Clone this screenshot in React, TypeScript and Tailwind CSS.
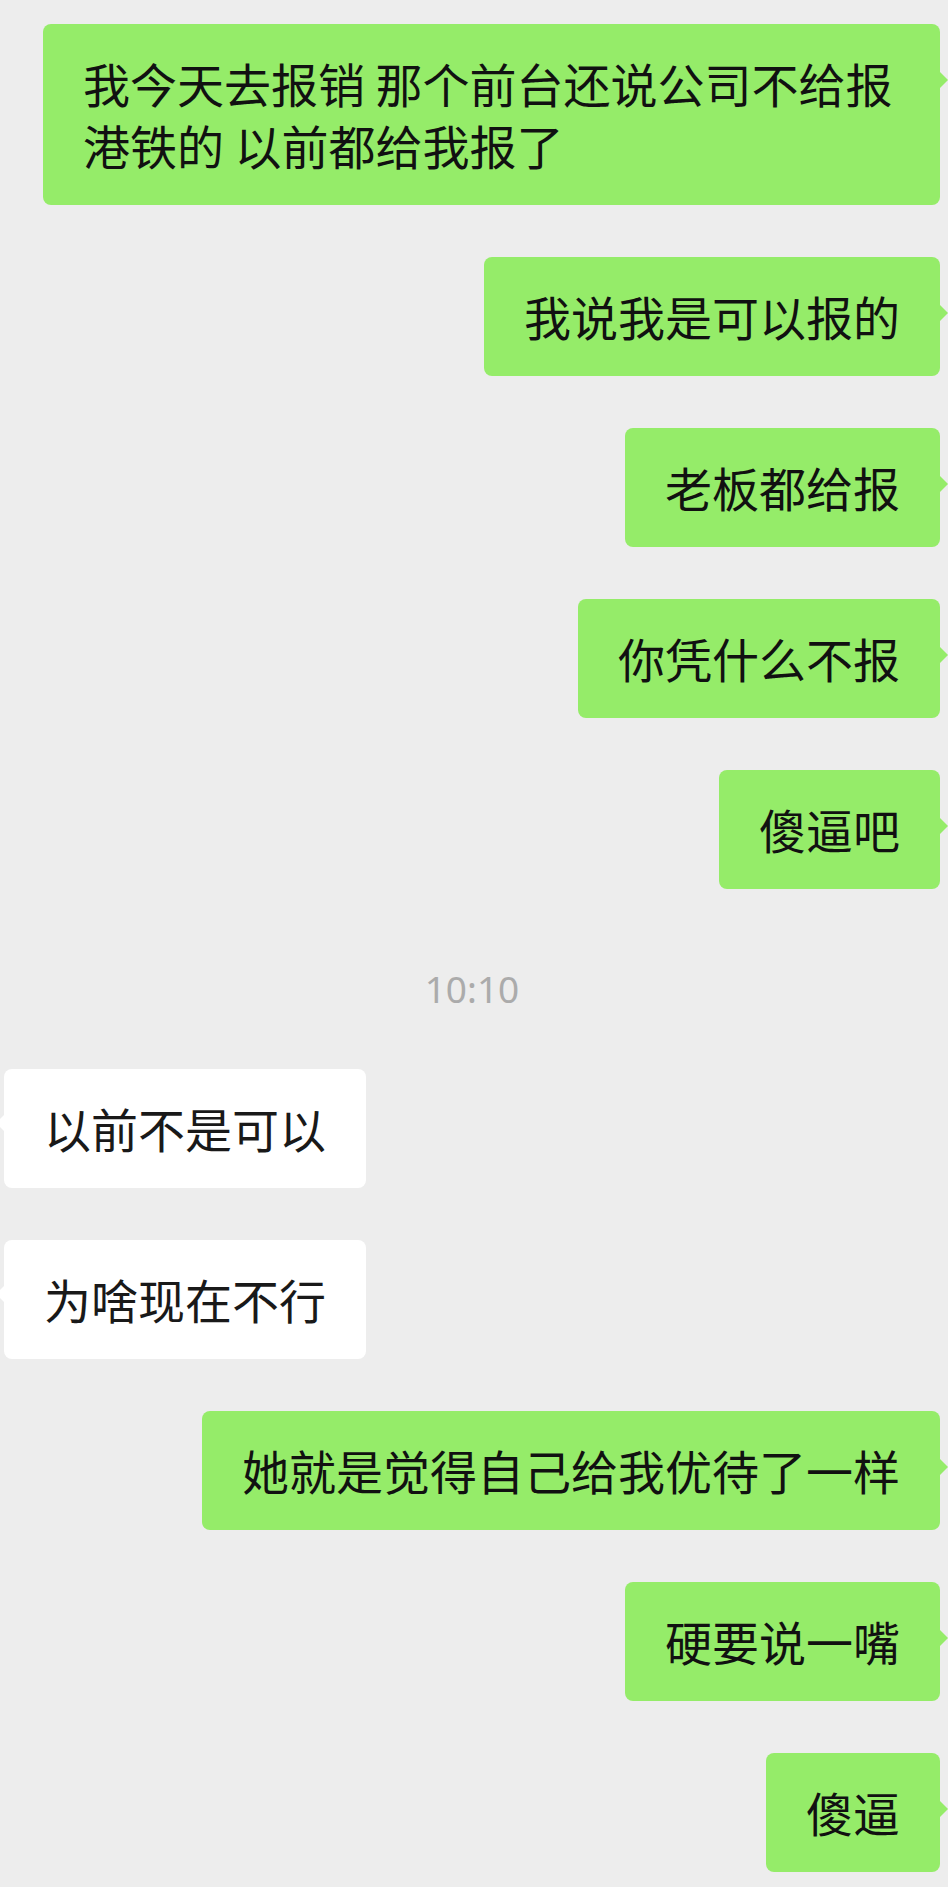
import React from 'react'

interface Message {
  text: string
  mine: boolean
}

const before: Message[] = [
  { text: '我今天去报销 那个前台还说公司不给报港铁的 以前都给我报了', mine: true },
  { text: '我说我是可以报的', mine: true },
  { text: '老板都给报', mine: true },
  { text: '你凭什么不报', mine: true },
  { text: '傻逼吧', mine: true },
]

const after: Message[] = [
  { text: '以前不是可以', mine: false },
  { text: '为啥现在不行', mine: false },
  { text: '她就是觉得自己给我优待了一样', mine: true },
  { text: '硬要说一嘴', mine: true },
  { text: '傻逼', mine: true },
]

const font = { fontFamily: '"Noto Sans CJK SC", "Noto Sans", sans-serif' }

function Bubble({ text, mine }: Message) {
  return (
    <div className={mine ? 'flex justify-end' : 'flex justify-start'}>
      <div
        className={
          mine
            ? 'relative max-w-[897px] rounded-[8px] bg-[#95ec69] px-[40px] pt-[28px] pb-[29px] text-[47px] leading-[62px] text-[#111111]'
            : 'relative max-w-[897px] rounded-[8px] bg-white px-[40px] pt-[28px] pb-[29px] text-[47px] leading-[62px] text-[#191919]'
        }
        style={font}
      >
        {text}
        {/* little tail pointing at the avatar side */}
        {mine ? (
          <span className="absolute right-[-8px] top-[48px] h-0 w-0 border-y-[8px] border-l-[8px] border-y-transparent border-l-[#95ec69]" />
        ) : (
          <span className="absolute left-[-8px] top-[46px] h-0 w-0 border-y-[8px] border-r-[8px] border-y-transparent border-r-white" />
        )}
      </div>
    </div>
  )
}

export default function App() {
  return (
    <div className="min-h-screen w-[948px] overflow-hidden bg-[#ededed] pt-[24px] pr-[8px] pl-[4px] pb-[16px]">
      <div className="flex flex-col gap-[52px]">
        {before.map((m, i) => (
          <Bubble key={i} {...m} />
        ))}
      </div>

      <div
        className="mt-[80px] mb-[60px] text-center text-[37px] leading-[40px] text-[#ababab]"
        style={{ fontFamily: '"Noto Sans", "Liberation Sans", sans-serif' }}
      >
        10:10
      </div>

      <div className="flex flex-col gap-[52px]">
        {after.map((m, i) => (
          <Bubble key={i} {...m} />
        ))}
      </div>
    </div>
  )
}
